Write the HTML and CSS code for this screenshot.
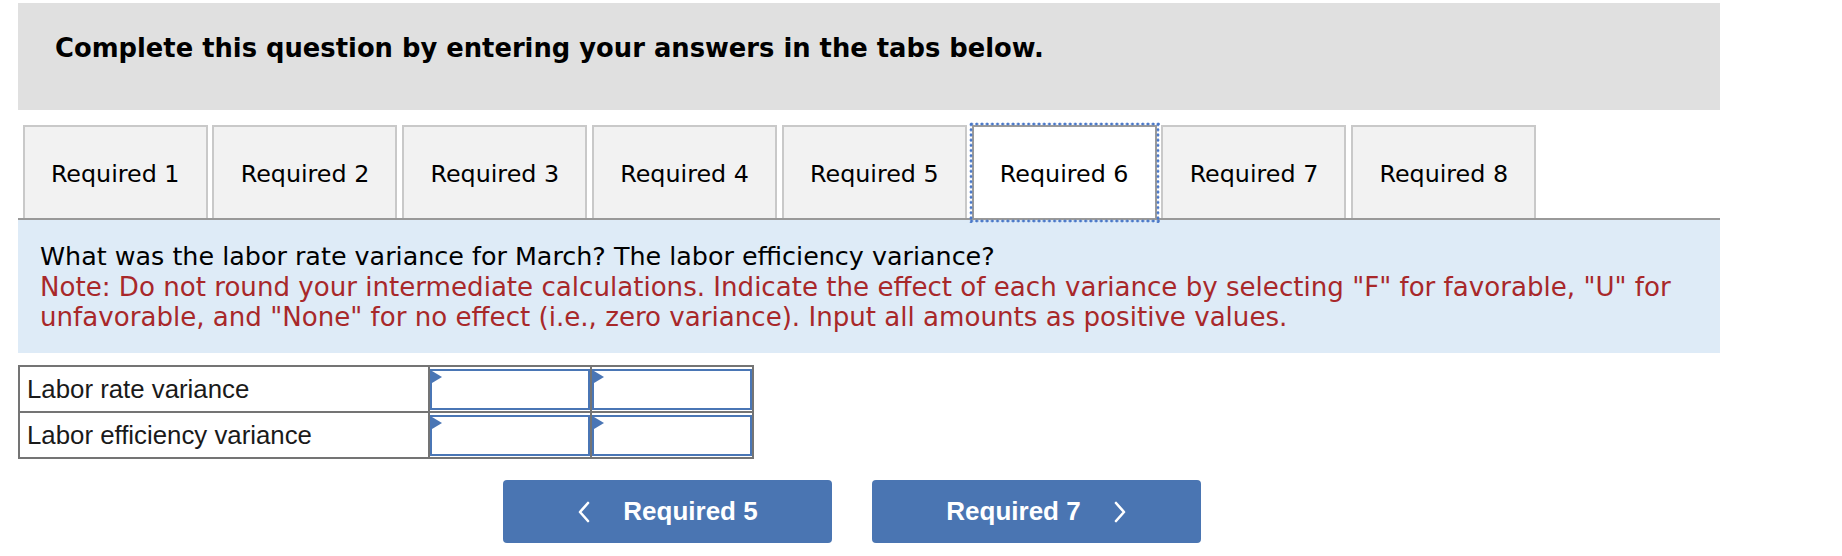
FILE: index.html
```html
<!DOCTYPE html>
<html lang="en">
<head>
<meta charset="utf-8">
<title>Required 6</title>
<link rel="stylesheet" href="styles.css">
</head>
<body>
<div class="page">
  <div class="header">
    <h1 class="header-title">Complete this question by entering your answers in the tabs below.</h1>
  </div>

  <div class="tabs">
    <div class="tab">Required 1</div>
    <div class="tab">Required 2</div>
    <div class="tab">Required 3</div>
    <div class="tab">Required 4</div>
    <div class="tab">Required 5</div>
    <div class="tab tab-active">Required 6</div>
    <div class="tab">Required 7</div>
    <div class="tab">Required 8</div>
  </div>

  <div class="panel">
    <p class="question">What was the labor rate variance for March? The labor efficiency variance?</p>
    <p class="note">Note: Do not round your intermediate calculations. Indicate the effect of each variance by selecting "F" for favorable, "U" for unfavorable, and "None" for no effect (i.e., zero variance). Input all amounts as positive values.</p>
  </div>

  <table class="answers">
    <tr>
      <td class="label">Labor rate variance</td>
      <td class="cell"><div class="input"><span class="flag"></span></div></td>
      <td class="cell"><div class="input"><span class="flag"></span></div></td>
    </tr>
    <tr>
      <td class="label">Labor efficiency variance</td>
      <td class="cell"><div class="input"><span class="flag"></span></div></td>
      <td class="cell"><div class="input"><span class="flag"></span></div></td>
    </tr>
  </table>

  <div class="nav">
    <button class="nav-btn">
      <svg class="chev" width="14" height="22" viewBox="0 0 14 22"><path d="M11 2 L3 11 L11 20" fill="none" stroke="#fff" stroke-width="2.6" stroke-linecap="round" stroke-linejoin="round"/></svg>
      <span>Required 5</span>
    </button>
    <button class="nav-btn">
      <span>Required 7</span>
      <svg class="chev" width="14" height="22" viewBox="0 0 14 22"><path d="M3 2 L11 11 L3 20" fill="none" stroke="#fff" stroke-width="2.6" stroke-linecap="round" stroke-linejoin="round"/></svg>
    </button>
  </div>
</div>
</body>
</html>
```

FILE: styles.css
```css
* { box-sizing: border-box; }

html, body {
  margin: 0;
  padding: 0;
  background: #ffffff;
}

.page {
  padding: 3px 0 0 18px;
  width: 1720px;
  font-family: "DejaVu Sans", Verdana, sans-serif;
  color: #000;
}

.header {
  background: #e0e0e0;
  height: 107px;
  padding: 30px 0 0 37px;
}

.header-title {
  margin: 0;
  font-size: 25.8px;
  line-height: 30px;
  font-weight: bold;
}

.tabs {
  display: flex;
  gap: 4.8px;
  margin-top: 15px;
  padding-left: 4.7px;
  border-bottom: 2px solid #999999;
}

.tab {
  width: 185px;
  height: 93px;
  display: flex;
  align-items: center;
  justify-content: center;
  background: #f2f2f2;
  border: 2px solid #c9c9c9;
  border-bottom: none;
  font-size: 23.8px;
  padding-top: 2px;
}

.tab-active {
  position: relative;
  background: #ffffff;
  border-color: #9a9a9a;
}

.tab-active::after {
  content: "";
  position: absolute;
  top: -5px;
  left: -5px;
  right: -5px;
  bottom: -5px;
  background:
    radial-gradient(circle, #4a78c8 1.2px, transparent 1.7px) top left / 5.2px 4px repeat-x,
    radial-gradient(circle, #4a78c8 1.2px, transparent 1.7px) bottom left / 5.2px 4px repeat-x,
    radial-gradient(circle, #4a78c8 1.2px, transparent 1.7px) top left / 4px 5.2px repeat-y,
    radial-gradient(circle, #4a78c8 1.2px, transparent 1.7px) top right / 4px 5.2px repeat-y;
}

.panel {
  background: #deebf7;
  padding: 21px 40px 20px 22px;
  height: 133px;
}

.panel p {
  margin: 0;
  font-size: 25.4px;
  line-height: 30.5px;
}

.panel .note {
  color: #a8282a;
  font-size: 26.1px;
}

.answers {
  margin-top: 12px;
  border-collapse: collapse;
  font-family: "Liberation Sans", Arial, sans-serif;
}

.answers td {
  border: 2.5px solid #747474;
  height: 46px;
  padding: 0;
}

.label {
  width: 410px;
  padding-left: 7px !important;
  font-size: 25.8px;
  color: #1a1a1a;
}

.cell {
  width: 162px;
}

.input {
  position: relative;
  height: 41px;
  border: 2px solid #4a76b5;
  background: #fff;
}

.flag {
  position: absolute;
  top: 0;
  left: 0;
  width: 0;
  height: 0;
  border-left: 10px solid #4a76b5;
  border-top: 6px solid transparent;
  border-bottom: 6px solid transparent;
}

.nav {
  display: flex;
  gap: 40px;
  margin-top: 21px;
  padding-left: 485px;
}

.nav-btn {
  width: 329px;
  height: 63px;
  display: flex;
  align-items: center;
  justify-content: center;
  gap: 32px;
  background: #4a75b2;
  border: none;
  border-radius: 4px;
  color: #fff;
  font-family: "Liberation Sans", Arial, sans-serif;
  font-weight: bold;
  font-size: 26px;
  padding: 0;
}

.chev {
  display: block;
}
```
